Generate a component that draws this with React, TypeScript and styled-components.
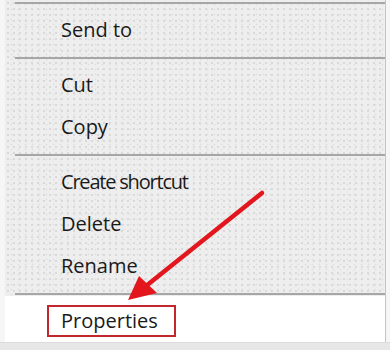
import React from 'react';
import styled, { createGlobalStyle } from 'styled-components';

const GlobalStyle = createGlobalStyle`
  html, body {
    margin: 0;
    padding: 0;
    background: #ffffff;
  }
`;

// spacing nudges Open Sans toward the narrower system font widths
const items: { label: string; spacing?: number }[][] = [
  [{ label: 'Send to' }],
  [{ label: 'Cut' }, { label: 'Copy' }],
  [{ label: 'Create shortcut', spacing: -1.2 }, { label: 'Delete' }, { label: 'Rename' }],
];

const App = () => {
  return (
    <>
      <GlobalStyle />
      <Frame>
        <Menu>
          <Separator $first />
          {items.map((group, gi) => (
            <React.Fragment key={gi}>
              {group.map((item) => (
                <Item key={item.label}>
                  <Label $spacing={item.spacing}>{item.label}</Label>
                </Item>
              ))}
              <Separator $last={gi === items.length - 1} />
            </React.Fragment>
          ))}
          <Item $highlighted>
            <Label $boxed>Properties</Label>
          </Item>
        </Menu>
        <BottomEdge />
        {/* annotation arrow pointing at Properties */}
        <Arrow width="390" height="350" viewBox="0 0 390 350">
          <line x1="262" y1="193" x2="146" y2="286" stroke="#e3161d" strokeWidth="4.5" strokeLinecap="round" />
          <polygon points="128,300 139,276 157,293" fill="#e3161d" />
        </Arrow>
      </Frame>
    </>
  );
};

// --- Styled Components ---
const Frame = styled.div`
  position: relative;
  width: 390px;
  height: 350px;
  overflow: hidden;
  background: #f6f6f6;
  font-family: 'Open Sans', 'Noto Sans', 'Liberation Sans', sans-serif;
`;

const Menu = styled.div`
  display: flex;
  flex-direction: column;
  width: 381px;
  height: 342px;
  margin-left: 5px;
  padding-top: 2px;
  box-sizing: border-box;
  border-right: 1px solid #c4c4c4;
  background-color: #eeeeee;
  background-image:
    radial-gradient(circle, #d9d9d9 0.8px, transparent 1.2px),
    radial-gradient(circle, #dedede 0.7px, transparent 1.1px);
  background-size: 6px 6px, 7px 5px;
  background-position: 0 0, 3px 2px;
`;

const Separator = styled.div<{ $first?: boolean; $last?: boolean }>`
  height: 2px;
  margin: ${(p) => (p.$first ? '0 0 5px 10px' : p.$last ? '6px 0 1px 10px' : '6px 0 5px 10px')};
  background: #a6a6a6;
  flex-shrink: 0;
`;

const Item = styled.div<{ $highlighted?: boolean }>`
  display: flex;
  align-items: center;
  height: ${(p) => (p.$highlighted ? '46px' : '42px')};
  padding-top: ${(p) => (p.$highlighted ? '4px' : '0')};
  padding-left: 42px;
  box-sizing: border-box;
  background: ${(p) => (p.$highlighted ? '#ffffff' : 'transparent')};
  flex-shrink: 0;
`;

const Label = styled.span<{ $boxed?: boolean; $spacing?: number }>`
  font-size: 20px;
  color: #1a1a1a;
  line-height: 26px;
  letter-spacing: ${(p) => (p.$spacing ? `${p.$spacing}px` : 'normal')};
  padding: ${(p) => (p.$boxed ? '1px 16px 1px 12px' : '0 0 0 14px')};
  border: ${(p) => (p.$boxed ? '2px solid #c1272d' : 'none')};
`;

const BottomEdge = styled.div`
  height: 8px;
  background: #e7e7e7;
  border-top: 1px solid #dcdcdc;
`;

const Arrow = styled.svg`
  position: absolute;
  left: 0;
  top: 0;
  pointer-events: none;
`;

export default App;
